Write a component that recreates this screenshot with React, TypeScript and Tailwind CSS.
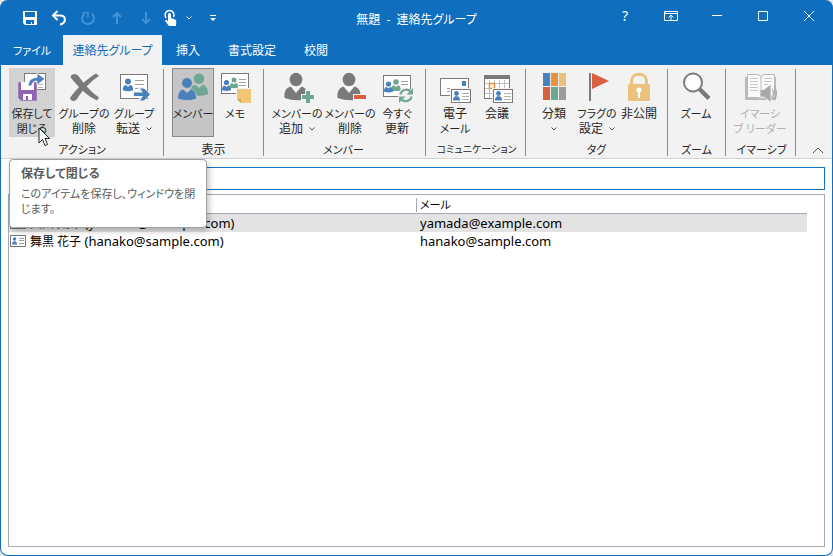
import React from 'react';
import clsx from 'clsx';

const GRAY = '#7a7a7a';
const BLUE = '#4a81ba';
const GREEN = '#70a793';
const RED = '#d9603f';
const GOLD = '#ebc27c';

function Icon({ children }: { children: React.ReactNode }) {
  return (
    <svg viewBox="0 0 32 32" className="w-8 h-8 shrink-0 overflow-visible" fill="none" aria-hidden="true">
      {children}
    </svg>
  );
}

// head and shoulders, head centred on x / y
function Person({ x, y, r, color }: { x: number; y: number; r: number; color: string }) {
  const w = r * 1.75;
  const top = y + r * 1.15;
  return (
    <g fill={color}>
      <circle cx={x} cy={y} r={r} />
      <path d={`M${x - w} ${top + r * 1.8}C${x - w} ${top + r * 0.4} ${x - w * 0.6} ${top} ${x - w * 0.4} ${top}L${x} ${top + r * 0.6}L${x + w * 0.4} ${top}C${x + w * 0.6} ${top} ${x + w} ${top + r * 0.4} ${x + w} ${top + r * 1.8}Q${x} ${top + r * 2.4} ${x - w} ${top + r * 1.8}Z`} />
    </g>
  );
}

function MiniCard({ x, y }: { x: number; y: number }) {
  return (
    <g>
      <rect x={x - 1} y={y - 1} width="21" height="15" fill="#f2f2f2" />
      <rect x={x + 0.5} y={y + 0.5} width="19" height="13" fill="#fff" stroke={GRAY} />
      <circle cx={x + 5.5} cy={y + 4.5} r="2.4" fill={BLUE} />
      <path d={`M${x + 2} ${y + 11.5}V${y + 9.5}L${x + 4} ${y + 7.3}H${x + 7}L${x + 9} ${y + 9.5}V${y + 11.5}Z`} fill={BLUE} />
      <path d={`M${x + 11} ${y + 4.5}H${x + 18}M${x + 11} ${y + 7.5}H${x + 18}M${x + 11} ${y + 10.5}H${x + 18}`} stroke="#b0b0b0" />
    </g>
  );
}

function GrayMember() {
  return (
    <g>
      <ellipse cx="15" cy="7.5" rx="6.4" ry="6.8" fill={GRAY} />
      <path d="M3.5 26C3 19 5 16 9.5 14.5L15 21L20.5 14.5C24.5 16 26.5 18 26.5 24V27Q15 30 3.5 26Z" fill={GRAY} />
      <path d="M11 14.5H19L15 19.5Z" fill="#fff" />
    </g>
  );
}

function SaveCloseIcon() {
  return (
    <Icon>
      <rect x="8.5" y="1.5" width="21" height="16" fill="#fff" stroke={GRAY} />
      <path d="M22 12.5H27M22 15.5H27" stroke="#b0b0b0" />
      <path d="M2 10H21V29H5L2 26Z" fill="#9062b4" stroke="#d2d2d2" strokeWidth="0.5" />
      <rect x="5" y="10" width="13" height="8" fill="#fff" />
      <path d="M7 22H16V28H12V24H10V28H7Z" fill="#fff" />
      <path d="M12 14C12.5 8 16 5.5 21 5.5V1L29 7L21 13V9C17.5 9 16.5 10.5 15.5 14Z" fill={BLUE} stroke="#fff" strokeWidth="0.8" />
    </Icon>
  );
}

function DeleteIcon() {
  return (
    <Icon>
      <path d="M2.5 5C4 1 8 1.5 10.5 4C15.5 11 22 19 31 25.5L29 28.5C19 24 9 14 2.5 5Z" fill={GRAY} />
      <path d="M28 1.5L31 4C22 10 14.5 18 9 27C7 30 2.5 29.5 2 26C9 16 18 7.5 28 1.5Z" fill={GRAY} />
    </Icon>
  );
}

function ForwardIcon() {
  return (
    <Icon>
      <rect x="2.5" y="2.5" width="27" height="24" fill="#fff" stroke={GRAY} />
      <Person x={10} y={9.5} r={3} color={BLUE} />
      <path d="M17 8.5H26M17 12.5H26M17 16.5H26" stroke="#a0a0a0" />
      <path d="M15 19H22L19 15H25L33 22L25 30H19L22 25H15Z" fill="#f2f2f2" />
      <path d="M16 20.5H25L22 16.5H26L32 22.2L26 28.5H22L25 24H16Z" fill={BLUE} />
    </Icon>
  );
}

function MembersIcon() {
  return (
    <Icon>
      <Person x={22} y={6.8} r={5.2} color={GREEN} />
      <g stroke="#c6c6c6" strokeWidth="0.8">
        <Person x={10} y={11} r={5.4} color={BLUE} />
      </g>
    </Icon>
  );
}

function MemoIcon() {
  return (
    <Icon>
      <rect x="2.5" y="1.5" width="27" height="20" fill="#fff" stroke={GRAY} />
      <Person x={15} y={8} r={2.5} color={GREEN} />
      <Person x={7.5} y={10.5} r={2.6} color={BLUE} />
      <path d="M20 7.5H27M20 10.5H27M20 13.5H27" stroke="#a0a0a0" />
      <rect x="17" y="16" width="16" height="16" fill="#f2f2f2" />
      <path d="M18 17H32V31H22L18 27Z" fill="#f0c774" />
      <path d="M18 27H22V31Z" fill="#d5a650" />
    </Icon>
  );
}

function AddMemberIcon() {
  return (
    <Icon>
      <GrayMember />
      <path d="M24 17.5H30V22H34.5V28H30V32H24V28H20V22H24Z" fill="#f2f2f2" />
      <path d="M25 19H29V23H33V27H29V31H25V27H21V23H25Z" fill={GREEN} />
    </Icon>
  );
}

function RemoveMemberIcon() {
  return (
    <Icon>
      <GrayMember />
      <rect x="19" y="22" width="14" height="6" fill="#f2f2f2" />
      <rect x="20" y="23" width="12" height="4" fill={RED} />
    </Icon>
  );
}

function UpdateNowIcon() {
  return (
    <Icon>
      <rect x="2.5" y="3.5" width="27" height="21" fill="#fff" stroke={GRAY} />
      <Person x={15} y={10} r={2.8} color={GREEN} />
      <Person x={7.5} y={12} r={2.6} color={BLUE} />
      <path d="M20 9.5H27M20 12.5H27" stroke="#a0a0a0" />
      <circle cx="25" cy="23.5" r="8" fill="#f2f2f2" />
      <g stroke={GREEN} strokeWidth="2.2">
        <path d="M19.5 22.5C20.5 16.5 28 16.5 30 20.5" />
        <path d="M30.5 24.5C29.5 30 22 30.5 20 26.5" />
      </g>
      <path d="M32 16V22.5H25.5ZM18 31V24.5H24.5Z" fill={GREEN} />
    </Icon>
  );
}

function EmailIcon() {
  return (
    <Icon>
      <rect x="1.5" y="6.5" width="28" height="17" fill="#fff" stroke={GRAY} />
      <rect x="23" y="9" width="4" height="5" fill={BLUE} />
      <path d="M8 16.5H17M8 19.5H12" stroke="#a0a0a0" />
      <MiniCard x={12} y={17} />
    </Icon>
  );
}

function MeetingIcon() {
  return (
    <Icon>
      <rect x="3.5" y="3.5" width="25" height="23" fill="#fff" stroke={GRAY} />
      <rect x="3" y="3" width="26" height="4" fill={GRAY} />
      <path d="M8.5 8V26M13.5 8V26M18.5 8V26M23.5 8V26M4 11.5H28M4 16.5H28M4 21.5H28" stroke="#c0c0c0" />
      <rect x="8.5" y="11.5" width="5" height="5" fill="#fff" stroke="#e8913c" strokeWidth="1.5" />
      <MiniCard x={12} y={17} />
    </Icon>
  );
}

function CategoryIcon() {
  return (
    <Icon>
      <rect x="5" y="1" width="7" height="13" fill={BLUE} />
      <rect x="13" y="1" width="7" height="13" fill="#e8913f" />
      <rect x="21" y="1" width="7" height="13" fill={GOLD} />
      <rect x="5" y="15" width="7" height="13" fill={RED} />
      <rect x="13" y="15" width="7" height="13" fill={GREEN} />
      <rect x="21" y="15" width="7" height="13" fill="#9c9c9c" />
    </Icon>
  );
}

function FlagIcon() {
  return (
    <Icon>
      <rect x="8" y="1" width="2" height="28" fill={GRAY} />
      <path d="M11 1L28 9L11 17Z" fill={RED} />
    </Icon>
  );
}

function LockIcon() {
  return (
    <Icon>
      <path d="M8.5 13V9C8.5 0 23.5 0 23.5 9V13" stroke={GOLD} strokeWidth="3" />
      <rect x="5" y="12" width="22" height="17" rx="1.5" fill={GOLD} />
      <circle cx="16" cy="18" r="2.6" fill="#fff" />
      <rect x="15" y="18" width="2" height="8" fill="#fff" />
    </Icon>
  );
}

function MagnifierIcon() {
  return (
    <Icon>
      <path d="M19.5 17L29 26.5" stroke={GRAY} strokeWidth="4.5" />
      <circle cx="13" cy="10.5" r="9" fill="#fff" stroke={GRAY} strokeWidth="2" />
    </Icon>
  );
}

function ReaderIcon() {
  return (
    <Icon>
      <path d="M1 5H3V26H16L17 27L18 26H31V5H32V28H1Z" fill="#b9b9b9" />
      <path d="M3.5 2.5H14L17 4.5L20 2.5H30.5V25.5H20L17 26.5L14 25.5H3.5Z" fill="#fafafa" stroke="#b9b9b9" />
      <path d="M17 4V26" stroke="#b9b9b9" />
      <path d="M6 6.5H14M6 9.5H14M6 12.5H14M6 15.5H14M6 18.5H14M20 6.5H28M20 9.5H28M20 12.5H24" stroke="#c8c8c8" />
      <path d="M16 17.5H20L27 12V30.5L20 25H16Z" fill="#a9a9a9" stroke="#f2f2f2" strokeWidth="0.8" />
      <path d="M28 17Q31 21 28 25.5M30 14.5Q35 21 30 28" stroke="#a9a9a9" strokeWidth="1.2" />
    </Icon>
  );
}

interface RibbonButtonProps {
  icon: React.ReactNode;
  lines: string[];
  width: string;
  menu?: boolean;
  pressed?: boolean;
  hovered?: boolean;
  disabled?: boolean;
}

function Chevron() {
  return (
    <svg viewBox="0 0 6 4" className="w-1.5 h-1" fill="none" stroke="#555" aria-hidden="true">
      <path d="M0.5 0.5L3 3L5.5 0.5" />
    </svg>
  );
}

// kana is set a little smaller than kanji in the ribbon
const labelSize = (text = '') => (/[ぁ-んァ-ヶ]/.test(text) ? 'text-[11px]' : 'text-xs');

function RibbonButton({ icon, lines, width, menu, pressed, hovered, disabled }: RibbonButtonProps) {
  return (
    <button
      type="button"
      disabled={disabled}
      aria-pressed={pressed}
      className={clsx(
        'flex h-[69px] flex-col items-center border pt-[3px] whitespace-nowrap',
        width,
        pressed && 'border-[#8a8a8a] bg-[#c6c6c6]',
        hovered && 'border-[#d2d2d2] bg-[#d2d2d2]',
        !pressed && !hovered && 'border-transparent hover:bg-[#d2d2d2]',
        disabled ? 'text-[#b1b1b1]' : 'text-[#262626]'
      )}
    >
      {icon}
      <span className={clsx('mt-0.5 leading-[15px]', labelSize(lines[0]))}>{lines[0]}</span>
      <span className="flex min-h-[15px] items-center gap-1.5">
        {lines[1] && <span className={clsx('leading-[15px]', labelSize(lines[1]))}>{lines[1]}</span>}
        {menu && <Chevron />}
      </span>
    </button>
  );
}

interface GroupProps {
  label: string;
  className: string;
  labelClass?: string;
  children: React.ReactNode;
}

function Group({ label, className, labelClass = labelSize(label), children }: GroupProps) {
  return (
    <section aria-label={label} className={clsx('flex shrink-0 flex-col border-r border-[#8c8c8c]', className)}>
      <div className="-mt-px flex gap-0.5">{children}</div>
      <div className={clsx('mt-1.5 -ml-2 text-center whitespace-nowrap text-[#262626]', labelClass)}>
        <div className="leading-[13px]">{label}</div>
      </div>
    </section>
  );
}

function TitleBar() {
  const quick = 'flex h-8 w-7 items-center justify-center';
  const control = 'flex h-8 w-[46px] items-center justify-center hover:bg-white/20';
  return (
    <header className="grid h-[35px] shrink-0 grid-cols-[1fr_auto_1fr] text-white">
      <div className="flex gap-px pt-0.5 pl-[15px]">
        <button type="button" aria-label="上書き保存" className={quick}>
          <svg viewBox="0 0 16 16" className="h-4 w-4" fill="none">
            <path d="M1 1H15V15H3L1 13Z" fill="#fff" />
            <path d="M3 2H13V7H3ZM4 10H12V14H10V12H7V14H4Z" fill="#106ebe" />
            <path d="M7 12H9V14H7Z" fill="#106ebe" />
          </svg>
        </button>
        <button type="button" aria-label="元に戻す" className={quick}>
          <svg viewBox="0 0 16 16" className="h-4 w-4" fill="none" stroke="#fff" strokeWidth="2">
            <path d="M6.5 1L2 5.5L6.5 10" />
            <path d="M2.5 5.5H9C15.5 5.5 15.5 13 9 14.5" />
          </svg>
        </button>
        <button type="button" aria-label="繰り返し" className={quick} disabled>
          <svg viewBox="0 0 16 16" className="h-4 w-4" fill="none" stroke="#3f93d6" strokeWidth="2">
            <path d="M12 3.5C16 8 13 14 8 14C2.5 14 0 7.5 4.5 3.5" />
            <path d="M3 2.5H8V7.5" strokeWidth="1.5" />
          </svg>
        </button>
        <button type="button" aria-label="前のアイテム" className={quick} disabled>
          <svg viewBox="0 0 16 16" className="h-4 w-4" fill="none" stroke="#3f93d6" strokeWidth="2">
            <path d="M8 14V3M4 7L8 3L12 7" />
          </svg>
        </button>
        <button type="button" aria-label="次のアイテム" className={quick} disabled>
          <svg viewBox="0 0 16 16" className="h-4 w-4" fill="none" stroke="#3f93d6" strokeWidth="2">
            <path d="M8 2V13M4 9L8 13L12 9" />
          </svg>
        </button>
        <button type="button" aria-label="タッチ/マウス モードの切り替え" className="flex h-8 w-5 items-center justify-center">
          <svg viewBox="0 0 16 18" className="h-[18px] w-4" fill="none">
            <path d="M3 9C0.5 4 4 1.5 6.5 1.5C10 1.5 12 5 10.5 8" stroke="#fff" strokeWidth="1.5" />
            <path d="M5 5.5C5 3.5 8 3.5 8 5.5V9L12 10.5C13.5 11 13.5 12 13 17H6L2 12C2.5 10.5 4 11 5 12.5Z" fill="#fff" />
          </svg>
        </button>
        <button type="button" aria-label="モードのメニュー" className="flex h-8 w-3.5 items-center justify-center">
          <svg viewBox="0 0 6 4" className="h-1 w-1.5" fill="none" stroke="#fff">
            <path d="M0.5 0.5L3 3L5.5 0.5" />
          </svg>
        </button>
        <button type="button" aria-label="クイック アクセス ツール バーのカスタマイズ" className="flex h-8 w-8 items-center justify-center">
          <svg viewBox="0 0 6 6" className="h-1.5 w-1.5" fill="#fff">
            <path d="M0 0H6V1H0ZM0 3H6L3 6Z" />
          </svg>
        </button>
      </div>
      <h1 className="pt-[5px] leading-[30px] whitespace-pre">無題  -  連絡先グループ</h1>
      <div className="flex justify-end">
        <button type="button" aria-label="ヘルプ" className={clsx(control, 'text-sm')}>?</button>
        <button type="button" aria-label="リボンの表示オプション" className={control}>
          <svg viewBox="0 0 14 12" className="h-3 w-3.5" fill="none" stroke="#fff">
            <path d="M0.5 1.5H13.5V10.5H0.5ZM0.5 3.5H13.5M7 10V5M4.5 7.5L7 5L9.5 7.5" />
          </svg>
        </button>
        <button type="button" aria-label="最小化" className={control}>
          <svg viewBox="0 0 10 10" className="h-2.5 w-2.5" stroke="#fff"><path d="M0 4.5H10" /></svg>
        </button>
        <button type="button" aria-label="最大化" className={control}>
          <svg viewBox="0 0 10 10" className="h-2.5 w-2.5" fill="none" stroke="#fff"><path d="M0.5 0.5H9.5V9.5H0.5Z" /></svg>
        </button>
        <button type="button" aria-label="閉じる" className={control}>
          <svg viewBox="0 0 10 10" className="h-2.5 w-2.5" stroke="#fff"><path d="M0 0L10 10M10 0L0 10" /></svg>
        </button>
      </div>
    </header>
  );
}

function Tabs() {
  const others = ['挿入', '書式設定', '校閲'];
  return (
    <nav className="flex h-[30px] shrink-0 text-white">
      <button type="button" className="w-[62px] pt-0.5 text-[11px]">ファイル</button>
      <button type="button" aria-current="page" className="w-[99px] bg-[#f2f2f2] pt-0.5 text-[#106ebe]">連絡先グループ</button>
      {others.map((name) => (
        <button key={name} type="button" className="px-3.5 pt-0.5">{name}</button>
      ))}
    </nav>
  );
}

function SaveTooltip() {
  return (
    <div
      role="tooltip"
      className="absolute top-[91px] left-0 z-10 w-[198px] rounded border border-[#a0a0a0] bg-white py-[5px] pl-[11px] whitespace-nowrap text-[#5a5a5a] shadow-[2px_3px_6px_rgba(0,0,0,0.25)]"
    >
      <p className="font-bold leading-[18px]">保存して閉じる</p>
      <p className="mt-[3px] pb-1.5 text-[11px] leading-[15px]">
        このアイテムを保存し、ウィンドウを閉<br />じます。
      </p>
    </div>
  );
}

function Ribbon() {
  return (
    <div className="flex shrink-0 border-b border-[#d2d2d2] bg-[#f2f2f2] pt-1 pb-0.5">
      <Group label="アクション" className="w-[163px] pl-2">
        <div className="relative">
          <RibbonButton icon={<SaveCloseIcon />} lines={['保存して', '閉じる']} width="w-[46px]" hovered />
          <SaveTooltip />
          <svg viewBox="0 0 13 20" className="absolute top-[59px] left-[29px] z-20 h-5 w-[13px]" aria-hidden="true">
            <path d="M1 1V16L4.5 12.5L7 18.5L9.5 17.5L7 11.5H11.5Z" fill="#fff" stroke="#222" />
          </svg>
        </div>
        <RibbonButton icon={<DeleteIcon />} lines={['グループの', '削除']} width="w-[54px]" />
        <RibbonButton icon={<ForwardIcon />} lines={['グループ', '転送']} width="w-[42px]" menu />
      </Group>
      <Group label="表示" className="w-[100px] pl-2">
        <RibbonButton icon={<MembersIcon />} lines={['メンバー']} width="w-[42px]" pressed />
        <RibbonButton icon={<MemoIcon />} lines={['メモ']} width="w-[38px]" />
      </Group>
      <Group label="メンバー" className="w-[162px] pl-1.5">
        <RibbonButton icon={<AddMemberIcon />} lines={['メンバーの', '追加']} width="w-[54px]" menu />
        <RibbonButton icon={<RemoveMemberIcon />} lines={['メンバーの', '削除']} width="w-12" />
        <RibbonButton icon={<UpdateNowIcon />} lines={['今すぐ', '更新']} width="w-[42px]" />
      </Group>
      <Group label="コミュニケーション" className="w-[100px] pl-2.5" labelClass="text-[10px]">
        <RibbonButton icon={<EmailIcon />} lines={['電子', 'メール']} width="w-[38px]" />
        <RibbonButton icon={<MeetingIcon />} lines={['会議']} width="w-[42px]" />
      </Group>
      <Group label="タグ" className="w-[142px] pl-2">
        <RibbonButton icon={<CategoryIcon />} lines={['分類']} width="w-10" menu />
        <RibbonButton icon={<FlagIcon />} lines={['フラグの', '設定']} width="w-[42px]" menu />
        <RibbonButton icon={<LockIcon />} lines={['非公開']} width="w-[38px]" />
      </Group>
      <Group label="ズーム" className="w-[58px] pl-2">
        <RibbonButton icon={<MagnifierIcon />} lines={['ズーム']} width="w-10" />
      </Group>
      <Group label="イマーシブ" className="w-[70px] pl-2.5">
        <RibbonButton icon={<ReaderIcon />} lines={['イマーシ', 'ブ リーダー']} width="w-12" disabled />
      </Group>
      <button type="button" aria-label="リボンを折りたたむ" className="mr-2 mb-0.5 ml-auto self-end">
        <svg viewBox="0 0 12 7" className="h-[7px] w-3" fill="none" stroke="#555">
          <path d="M1 6L6 1L11 6" />
        </svg>
      </button>
    </div>
  );
}

const members = [
  { name: '山田 太郎', email: 'yamada@example.com', selected: true },
  { name: '舞黒 花子', email: 'hanako@sample.com', selected: false }
];

function MemberList() {
  return (
    <div className="mt-1 flex-1 border border-[#a5a9b7] pr-[17px]">
      <table className="w-full table-fixed border-collapse text-left">
        <thead>
          <tr className="h-[18px] border-b border-[#a5a9b7]">
            <th aria-label="名前" className="w-[407px] p-0"></th>
            <th className="p-0 text-[11px] font-normal">
              <div className="mt-[3px] mb-px border-l border-[#a5a9b7] pl-[3px] leading-[14px]">メール</div>
            </th>
          </tr>
        </thead>
        <tbody className="text-[13px]">
          {members.map((m) => (
            <tr key={m.email} className={clsx('h-[18px] whitespace-nowrap', m.selected && 'bg-[#e3e3e3]')}>
              <td className="p-0 leading-[18px]">
                <div className="flex h-[18px] items-center gap-1 pl-px">
                  <svg viewBox="0 0 16 12" className="h-3 w-4" aria-hidden="true">
                    <rect x="0.5" y="0.5" width="15" height="11" fill="#fff" stroke={GRAY} />
                    <circle cx="4.5" cy="4" r="1.8" fill={BLUE} />
                    <path d="M2 9.5Q2 6.3 4.5 6.3T7 9.5Z" fill={BLUE} />
                    <path d="M9 3.5H14M9 5.5H14M9 8.5H14" stroke="#999" />
                  </svg>
                  <span><span className="text-xs">{m.name}</span> ({m.email})</span>
                </div>
              </td>
              <td className="py-0 pr-0 pl-1 leading-[18px]">{m.email}</td>
            </tr>
          ))}
        </tbody>
      </table>
    </div>
  );
}

export default function App() {
  return (
    <div className="h-screen bg-[#e8e8e8] font-['Noto_Sans','Noto_Sans_CJK_JP',sans-serif] text-xs [font-feature-settings:'palt']">
      <div className="flex h-full flex-col overflow-hidden rounded-lg border border-[#106ebe] border-t-0 bg-[#106ebe]">
        <TitleBar />
        <Tabs />
        <Ribbon />
        <main className="flex flex-1 flex-col bg-white px-[7px] pt-2 pb-2 text-black">
          <div className="flex pl-12">
            <input type="text" aria-label="名前" className="h-[23px] min-w-0 flex-1 border border-[#0f74c4] px-1 outline-none" />
          </div>
          <MemberList />
        </main>
      </div>
    </div>
  );
}
